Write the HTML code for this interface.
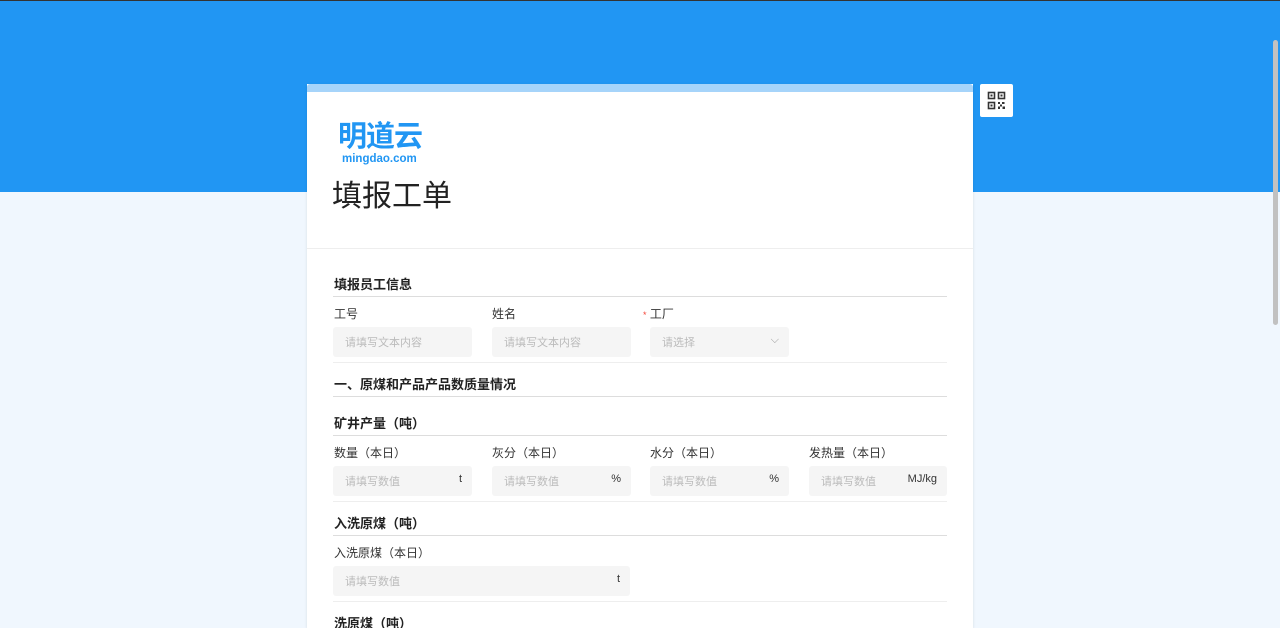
<!DOCTYPE html>
<html><head><meta charset="utf-8"><style>
*{margin:0;padding:0;box-sizing:border-box}
html,body{width:1280px;height:628px;overflow:hidden}
body{background:#f0f7fe;font-family:"Liberation Sans","Noto Sans CJK SC",sans-serif;position:relative}
.top{position:absolute;left:0;top:0;width:1280px;height:192px;background:#2196f3;border-top:1px solid #333}
.card{position:absolute;left:307px;top:84px;width:666px;height:544px;background:#fff;box-shadow:0 1px 3px rgba(0,0,0,.1)}
.strip{height:8px;background:#a6d4fa;border-radius:3px 3px 0 0}
.a{position:absolute}
.qr{position:absolute;left:980px;top:84px;width:33px;height:33px;background:#fff;border-radius:2px}
.h{position:absolute;left:27px;font-size:13px;font-weight:bold;color:#222}
.ln{position:absolute;left:26px;width:614px;height:1px;background:#ddd}
.ln2{position:absolute;left:26px;width:614px;height:1px;background:#eee}
.lb{position:absolute;font-size:12px;color:#333}
.in{position:absolute;height:30px;width:139px;background:#f5f5f5;border-radius:3px;font-size:11px;color:#bbb;padding:7px 12px}
.u{position:absolute;right:10px;top:7px;color:#333;font-size:11px}
.sb{position:absolute;right:2px;top:40px;width:5px;height:285px;background:#c1c1c1;border-radius:3px}
</style></head><body>
<div class="top"></div>
<div class="sb"></div>
<div class="qr"><svg width="33" height="33" viewBox="0 0 33 33"><g fill="none" stroke="#333" stroke-width="1.6"><rect x="8.5" y="8.5" width="6" height="6"/><rect x="18.5" y="8.5" width="6" height="6"/><rect x="8.5" y="18.5" width="6" height="6"/></g><g fill="#333"><rect x="10.5" y="10.5" width="2" height="2"/><rect x="20.5" y="10.5" width="2" height="2"/><rect x="10.5" y="20.5" width="2" height="2"/><rect x="18" y="18" width="2" height="2"/><rect x="22" y="18" width="2.5" height="2"/><rect x="20" y="20.5" width="2" height="2"/><rect x="18" y="22.5" width="2" height="2.5"/><rect x="22.5" y="22.5" width="2.5" height="2.5"/></g></svg></div>
<div class="card"><div class="strip"></div>
<div class="a" style="left:31px;top:36px;font-size:29px;font-weight:bold;color:#2196f3;letter-spacing:-1px;line-height:34px">明道云</div>
<div class="a" style="left:35px;top:69px;font-size:11.5px;color:#2196f3;font-weight:bold">mingdao.com</div>
<div class="a" style="left:25px;top:93px;font-size:30px;color:#222;line-height:40px">填报工单</div>
<div class="a" style="left:0;top:164px;width:666px;height:1px;background:#eee"></div>
<div class="h" style="top:190px">填报员工信息</div><div class="ln" style="top:212px"></div>
<div class="lb" style="left:27px;top:221px">工号</div><div class="lb" style="left:185px;top:221px">姓名</div><div class="lb" style="left:336px;top:221px"><span style="color:#f44336;font-size:9px">*</span> 工厂</div>
<div class="in" style="left:26px;top:243px">请填写文本内容</div><div class="in" style="left:185px;top:243px">请填写文本内容</div><div class="in" style="left:343px;top:243px;width:139px">请选择<span class="u" style="color:#999">⌵</span></div>
<div class="ln2" style="top:278px"></div>
<div class="h" style="top:290px">一、原煤和产品产品数质量情况</div><div class="ln" style="top:312px"></div>
<div class="h" style="top:329px">矿井产量（吨）</div><div class="ln" style="top:351px"></div>
<div class="lb" style="left:27px;top:360px">数量（本日）</div><div class="lb" style="left:185px;top:360px">灰分（本日）</div><div class="lb" style="left:343px;top:360px">水分（本日）</div><div class="lb" style="left:502px;top:360px">发热量（本日）</div>
<div class="in" style="left:26px;top:382px">请填写数值<span class="u">t</span></div><div class="in" style="left:185px;top:382px">请填写数值<span class="u">%</span></div><div class="in" style="left:343px;top:382px">请填写数值<span class="u">%</span></div><div class="in" style="left:502px;top:382px;width:138px">请填写数值<span class="u">MJ/kg</span></div>
<div class="ln2" style="top:417px"></div>
<div class="h" style="top:429px">入洗原煤（吨）</div><div class="ln" style="top:451px"></div>
<div class="lb" style="left:27px;top:460px">入洗原煤（本日）</div>
<div class="in" style="left:26px;top:482px;width:297px">请填写数值<span class="u">t</span></div>
<div class="ln2" style="top:517px"></div>
<div class="h" style="top:529px">洗原煤（吨）</div>
</div>
</body></html>
